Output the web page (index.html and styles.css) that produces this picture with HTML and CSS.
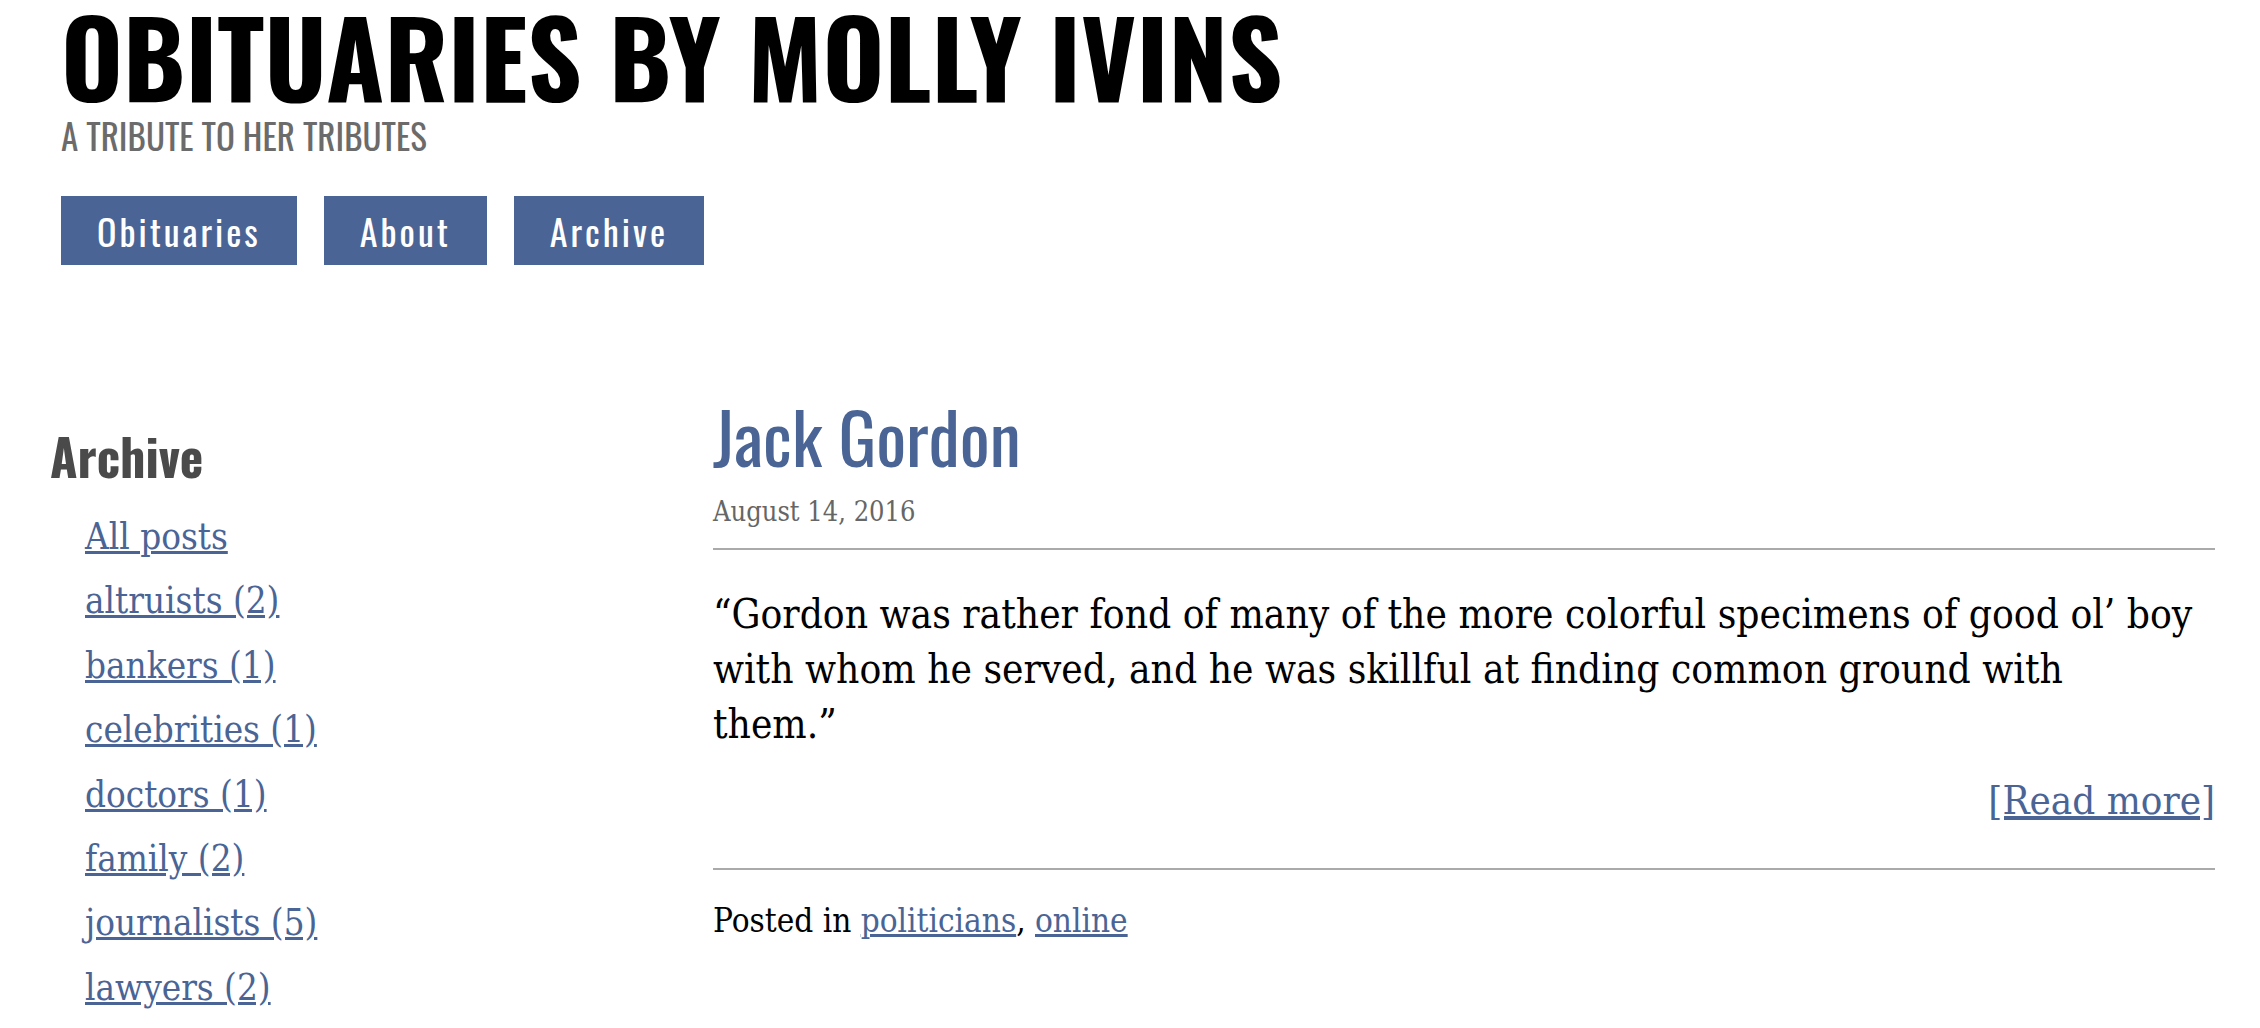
FILE: index.html
```html
<!DOCTYPE html>
<html lang="en">
<head>
<meta charset="utf-8">
<title>Obituaries by Molly Ivins</title>
<link rel="stylesheet" href="styles.css">
</head>
<body>
<header class="site-header">
  <h1 class="site-title">OBITUARIES BY MOLLY IVINS</h1>
  <p class="site-tagline">A TRIBUTE TO HER TRIBUTES</p>
  <nav class="site-nav">
    <a class="nav-item" href="#">Obituaries</a>
    <a class="nav-item" href="#">About</a>
    <a class="nav-item" href="#">Archive</a>
  </nav>
</header>
<div class="layout">
  <aside class="sidebar">
    <h2 class="sidebar-title">Archive</h2>
    <ul class="archive-list">
      <li><a href="#">All posts</a></li>
      <li><a href="#">altruists (2)</a></li>
      <li><a href="#">bankers (1)</a></li>
      <li><a href="#">celebrities (1)</a></li>
      <li><a href="#">doctors (1)</a></li>
      <li><a href="#">family (2)</a></li>
      <li><a href="#">journalists (5)</a></li>
      <li><a href="#">lawyers (2)</a></li>
    </ul>
  </aside>
  <main class="content">
    <article class="post">
      <h2 class="post-title"><a href="#">Jack Gordon</a></h2>
      <div class="post-date">August 14, 2016</div>
      <p class="post-excerpt">“Gordon was rather fond of many of the more colorful specimens of good ol’ boy with whom he served, and he was skillful at finding common ground with<br>them.”</p>
      <p class="read-more"><a href="#">[Read more]</a></p>
      <footer class="post-meta">Posted in <a href="#">politicians</a>, <a href="#">online</a></footer>
    </article>
  </main>
</div>
</body>
</html>
```
FILE: styles.css
```css
html, body {
  margin: 0;
  padding: 0;
  background: #ffffff;
}
body {
  font-family: "DejaVu Serif Condensed", "DejaVu Serif", serif;
  color: #000;
}
a {
  color: #4a6595;
}

/* Header */
.site-header {
  padding: 1px 0 0 61px;
}
.site-title {
  margin: 0;
  font-family: "Oswald", "Open Sans", sans-serif;
  font-weight: 700;
  font-size: 106px;
  line-height: 107px;
  color: #000;
}
.site-tagline {
  margin: 10px 0 0;
  font-family: "Oswald", "Open Sans", sans-serif;
  font-weight: 400;
  font-size: 35px;
  line-height: 35px;
  color: #6b6b6b;
}
.site-nav {
  display: flex;
  gap: 27px;
  margin-top: 43px;
}
.nav-item {
  display: block;
  height: 69px;
  line-height: 69px;
  padding: 0 36px;
  background: #4a6595;
  color: #fff;
  text-decoration: none;
  font-family: "Oswald", "Open Sans", sans-serif;
  font-size: 36px;
  letter-spacing: 3px;
}

/* Layout */
.layout {
  display: grid;
  grid-template-columns: 663px 1fr;
  padding: 0 45px 0 50px;
  margin-top: 134px;
}

/* Sidebar */
.sidebar-title {
  margin: 31px 0 0;
  font-family: "Oswald", "Open Sans", sans-serif;
  font-weight: 700;
  font-size: 50px;
  line-height: 50px;
  color: #4a4a4a;
}
.archive-list {
  list-style: none;
  margin: 25px 0 0;
  padding: 0 0 0 35px;
}
.archive-list li {
  font-size: 36.5px;
  line-height: 64.4px;
}

/* Post */
.post-title {
  margin: 0;
  font-family: "Oswald", "Open Sans", sans-serif;
  font-weight: 400;
  font-size: 70.5px;
  line-height: 72px;
}
.post-title a {
  text-decoration: none;
}
.post-date {
  margin-top: 25px;
  font-size: 27px;
  line-height: 32px;
  color: #666;
  padding-bottom: 20px;
  border-bottom: 2px solid #aaa;
}
.post-excerpt {
  margin: 37px 0 0;
  font-size: 40.3px;
  line-height: 55px;
}
.read-more {
  margin: 21px 0 0;
  text-align: right;
  font-size: 40px;
  line-height: 55px;
  padding-bottom: 40px;
  border-bottom: 2px solid #aaa;
}
.post-meta {
  margin-top: 28px;
  font-size: 33px;
  line-height: 46px;
}
```
